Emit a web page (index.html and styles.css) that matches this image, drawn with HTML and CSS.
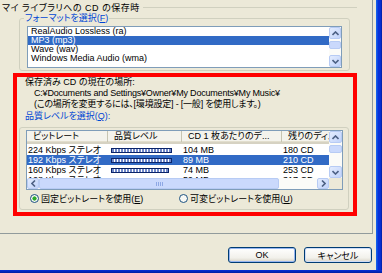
FILE: index.html
```html
<!DOCTYPE html>
<html lang="ja">
<head>
    <meta charset="UTF-8">
    <title>CD の保存時</title>
    <link rel="stylesheet" href="styles.css">
</head>
<body>

<div class="shell">
    <div class="dialog">
        <div class="page">
            <!-- HEADING -->
            <div class="heading">
                <span class="title">マイ ライブラリへの CD の保存時</span>
                <span class="rule"></span>
            </div>

            <!-- FORMAT -->
            <fieldset class="group">
                <legend>フォーマットを選択(<u>F</u>)</legend>
                <div class="listbox">
                    <div class="items">
                        <div class="item">RealAudio Lossless (ra)</div>
                        <div class="item selected">MP3 (mp3)</div>
                        <div class="item">Wave (wav)</div>
                        <div class="item">Windows Media Audio (wma)</div>
                    </div>
                    <div class="vscroll small">
                        <div class="sbtn"><svg width="7" height="5" viewBox="0 0 7 5"><path d="M0.5 4L3.5 1L6.5 4" fill="none" stroke="#4D6185" stroke-width="1.6"/></svg></div>
                        <div class="thumb"></div>
                        <div class="track"></div>
                        <div class="sbtn"><svg width="7" height="5" viewBox="0 0 7 5"><path d="M0.5 1L3.5 4L6.5 1" fill="none" stroke="#4D6185" stroke-width="1.6"/></svg></div>
                    </div>
                </div>
            </fieldset>

            <!-- HIGHLIGHTED AREA -->
            <div class="marked">
                <div class="info">
                    <div>保存済み CD の現在の場所:</div>
                    <div class="indent">C:¥Documents and Settings¥Owner¥My Documents¥My Music¥</div>
                    <div class="indent">(この場所を変更するには、[環境設定] - [一般] を使用します。)</div>
                    <div class="caption">品質レベルを選択(<u>Q</u>):</div>
                </div>

                <div class="box">
                    <div class="listview">
                        <div class="lv-main">
                            <div class="lv-head">
                                <div class="col c1">ビットレート</div>
                                <div class="col c2">品質レベル</div>
                                <div class="col c3">CD 1 枚あたりのデ...</div>
                                <div class="col c4">残りのディスク</div>
                            </div>
                            <div class="lv-rows">
                                <div class="row">
                                    <div class="cell c1">224 Kbps ステレオ</div>
                                    <div class="cell c2"><span class="meter"></span></div>
                                    <div class="cell c3">104 MB</div>
                                    <div class="cell c4">180 CD</div>
                                </div>
                                <div class="row selected">
                                    <div class="cell c1">192 Kbps ステレオ</div>
                                    <div class="cell c2"><span class="meter"></span></div>
                                    <div class="cell c3">89 MB</div>
                                    <div class="cell c4">210 CD</div>
                                </div>
                                <div class="row">
                                    <div class="cell c1">160 Kbps ステレオ</div>
                                    <div class="cell c2"><span class="meter"></span></div>
                                    <div class="cell c3">74 MB</div>
                                    <div class="cell c4">253 CD</div>
                                </div>
                                <div class="row">
                                    <div class="cell c1">128 Kbps ステレオ</div>
                                    <div class="cell c2"><span class="meter"></span></div>
                                    <div class="cell c3">59 MB</div>
                                    <div class="cell c4">317 CD</div>
                                </div>
                            </div>
                        </div>
                        <div class="vscroll">
                            <div class="sbtn"><svg width="7" height="5" viewBox="0 0 7 5"><path d="M0.5 4L3.5 1L6.5 4" fill="none" stroke="#4D6185" stroke-width="1.6"/></svg></div>
                            <div class="thumb"></div>
                            <div class="track"></div>
                            <div class="sbtn"><svg width="7" height="5" viewBox="0 0 7 5"><path d="M0.5 1L3.5 4L6.5 1" fill="none" stroke="#4D6185" stroke-width="1.6"/></svg></div>
                        </div>
                        <div class="hscroll">
                            <div class="sbtn"><svg width="5" height="7" viewBox="0 0 5 7"><path d="M4 0.5L1 3.5L4 6.5" fill="none" stroke="#4D6185" stroke-width="1.6"/></svg></div>
                            <div class="hthumb"><span class="grip"></span></div>
                            <div class="track"></div>
                            <div class="sbtn"><svg width="5" height="7" viewBox="0 0 5 7"><path d="M1 0.5L4 3.5L1 6.5" fill="none" stroke="#4D6185" stroke-width="1.6"/></svg></div>
                        </div>
                        <div class="corner"></div>
                    </div>

                    <div class="radios">
                        <label class="opt first"><span class="radio on"></span>固定ビットレートを使用(<u>E</u>)</label>
                        <label class="opt"><span class="radio"></span>可変ビットレートを使用(<u>U</u>)</label>
                    </div>
                </div>
            </div>
        </div>

        <!-- BUTTONS -->
        <div class="footer">
            <button class="btn default">OK</button>
            <button class="btn">キャンセル</button>
        </div>
    </div>
    <div class="frame-right"></div>
</div>
<div class="frame-bottom"></div>

</body>
</html>
```

FILE: styles.css
```css
body {
    margin: 0;
    width: 382px;
    height: 273px;
    overflow: hidden;
    background: #ECE9D8;
    font-family: "Liberation Sans", "Noto Sans CJK JP", sans-serif;
    font-size: 9px;
    font-feature-settings: "palt";
    color: #000;
}
.shell {
    display: flex;
    height: 270px;
}
.dialog {
    width: 376px;
    display: flex;
    flex-direction: column;
}
.frame-right {
    width: 6px;
    background: linear-gradient(90deg, #166AEE, #0831D9 40%, #0831D9 70%, #001EA0);
}
.frame-bottom {
    height: 3px;
    background: linear-gradient(180deg, #0831D9, #001EA0);
}
.page {
    width: 372px;
    height: 233px;
    border-right: 1px solid #919B9C;
    border-bottom: 1px solid #919B9C;
}
.heading {
    display: flex;
    align-items: center;
    height: 14px;
    padding-left: 2px;
    margin-right: 15px;
    white-space: nowrap;
}
.title {
    letter-spacing: 0.5px;
}
.rule {
    flex: 1;
    height: 1px;
    margin-left: 3px;
    background: #D0D0BF;
}
.group {
    margin: -1px 0 0 19px;
    width: 331px;
    box-sizing: border-box;
    border: 1px solid #D0D0BF;
    border-radius: 3px;
    padding: 3px 7px 2px 7px;
}
.group legend {
    color: #0046D5;
    line-height: 10px;
    padding: 0 1px;
    margin-left: -3px;
}
.listbox {
    display: flex;
    height: 42px;
    box-sizing: border-box;
    border: 1px solid #7F9DB9;
    background: #fff;
}
.items {
    flex: 1;
}
.item {
    height: 9px;
    line-height: 9px;
    padding-left: 3px;
    white-space: nowrap;
}
.item.selected, .row.selected {
    background: #316AC5;
    color: #fff;
}
.vscroll {
    width: 13px;
    display: flex;
    flex-direction: column;
    background: #FBFBF8;
}
.vscroll.small {
    width: 12px;
}
.sbtn {
    height: 12px;
    flex: none;
    box-sizing: border-box;
    border: 1px solid #B7CBF4;
    border-radius: 2px;
    background: linear-gradient(135deg, #E3ECFE, #C1D3FB);
    display: flex;
    align-items: center;
    justify-content: center;
}
.thumb {
    height: 8px;
    margin-top: 2px;
    box-sizing: border-box;
    border: 1px solid #B7CBF4;
    border-radius: 2px;
    background: #CAD9FC;
}
.track {
    flex: 1;
}
.marked {
    margin: 2px 0 0 13px;
    width: 344px;
    height: 143px;
    box-sizing: border-box;
    border: 4px solid #FF0000;
    padding: 0 4px 0 2px;
}
.info {
    padding-left: 6px;
    line-height: 11px;
    white-space: nowrap;
}
.indent {
    padding-left: 9px;
    letter-spacing: -0.2px;
}
.caption {
    color: #0046D5;
    margin-top: 1px;
}
.box {
    margin-top: 5px;
    height: 83px;
    box-sizing: border-box;
    border: 1px solid #D0D0BF;
    border-radius: 3px;
    padding: 2px 0 0 6px;
}
.listview {
    width: 317px;
    height: 60px;
    box-sizing: border-box;
    border: 1px solid #7F9DB9;
    background: #fff;
    display: grid;
    grid-template-columns: 302px 13px;
    grid-template-rows: 47px 11px;
}
.lv-main {
    overflow: hidden;
}
.lv-head {
    display: flex;
    height: 13px;
    box-sizing: border-box;
    background: #F4F3EC;
    border-bottom: 2px solid #D6D2C2;
    box-shadow: inset 0 -1px 0 #E2DECD;
}
.col {
    box-sizing: border-box;
    line-height: 11px;
    padding-left: 6px;
    white-space: nowrap;
    overflow: hidden;
    border-right: 1px solid #C7C5B2;
    margin: 0;
}
.c1 { width: 81px; }
.c2 { width: 74px; }
.c3 { width: 100px; }
.c4 { width: 47px; }
.col.c4 {
    border-right: none;
}
.lv-rows {
    padding-top: 1px;
}
.row {
    display: flex;
    height: 10px;
    line-height: 10px;
    white-space: nowrap;
}
.cell {
    padding-left: 1px;
    box-sizing: border-box;
}
.cell.c2 {
    display: flex;
    align-items: center;
    padding-left: 3px;
}
.meter {
    width: 61px;
    height: 5px;
    box-sizing: border-box;
    border: 1px solid #0A246A;
    background: repeating-linear-gradient(90deg, #6F88C9 0 2px, #fff 2px 3px);
}
.row:nth-child(3) .meter {
    width: 58px;
}
.hscroll {
    display: flex;
    background: #FBFBF8;
}
.hscroll .sbtn {
    width: 12px;
    height: 11px;
}
.hthumb {
    width: 240px;
    box-sizing: border-box;
    border: 1px solid #B7CBF4;
    border-radius: 2px;
    background: #CAD9FC;
    display: flex;
    align-items: center;
    justify-content: center;
}
.grip {
    width: 7px;
    height: 4px;
    background: repeating-linear-gradient(90deg, #8EA8E4 0 1px, transparent 1px 2px);
}
.corner {
    background: #ECE9D8;
}
.radios {
    display: flex;
    align-items: center;
    margin: 3px 0 0 4px;
    height: 11px;
}
.opt {
    display: flex;
    align-items: center;
    white-space: nowrap;
}
.opt.first {
    width: 149px;
}
.radio {
    width: 9px;
    height: 9px;
    box-sizing: border-box;
    border: 1px solid #1C5180;
    border-radius: 50%;
    background: #F8F8F4;
    margin-right: 2px;
}
.radio.on {
    background: radial-gradient(circle, #2BAA2B 0 1.8px, #F8F8F4 2.4px);
}
.footer {
    display: flex;
    justify-content: flex-end;
    gap: 8px;
    padding: 13px 4px 0 0;
}
.btn {
    width: 68px;
    height: 16px;
    padding: 0;
    font: inherit;
    color: #000;
    border: 1px solid #003C74;
    border-radius: 3px;
    background: linear-gradient(180deg, #FFFFFF, #F2F1EB 70%, #D8D3C7);
    box-shadow: inset 0 0 0 1px #CEDCF6;
}
.btn.default {
    box-shadow: inset 0 0 0 1px #96B5F0;
}
```
